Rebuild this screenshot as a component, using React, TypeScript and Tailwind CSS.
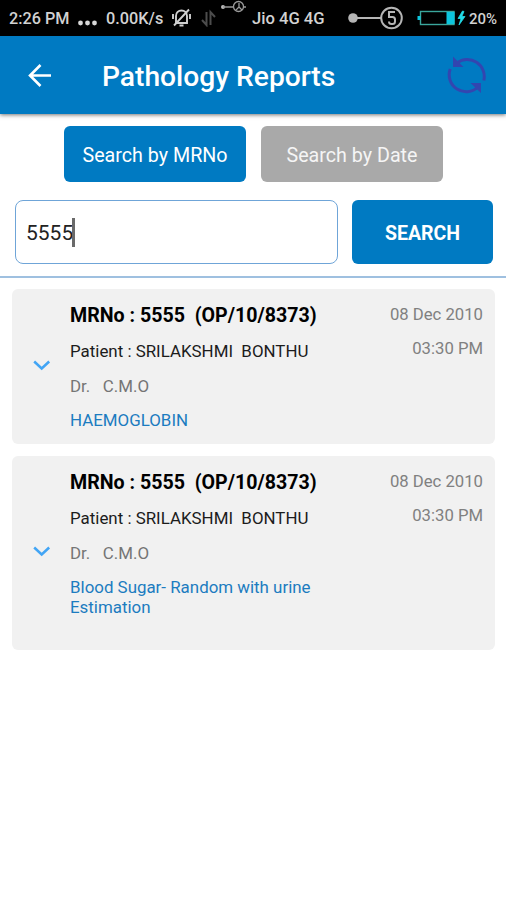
import { useState } from "react";

interface Report {
  id: number;
  mrNo: string;
  visit: string;
  patient: string;
  doctor: string;
  test: string;
  date: string;
  time: string;
}

const reports: Report[] = [
  {
    id: 1,
    mrNo: "5555",
    visit: "(OP/10/8373)",
    patient: "SRILAKSHMI  BONTHU",
    doctor: "C.M.O",
    test: "HAEMOGLOBIN",
    date: "08 Dec 2010",
    time: "03:30 PM",
  },
  {
    id: 2,
    mrNo: "5555",
    visit: "(OP/10/8373)",
    patient: "SRILAKSHMI  BONTHU",
    doctor: "C.M.O",
    test: "Blood Sugar- Random with urine Estimation",
    date: "08 Dec 2010",
    time: "03:30 PM",
  },
];

const StatusBar = () => (
  <div className="flex h-9 items-center bg-black pl-[9px] text-[16px] leading-5 font-medium whitespace-nowrap text-[#d2d2d2]">
    <span className="w-[69px] pt-0.5 text-[16.200px]">2:26 PM</span>
    <svg className="mt-2.5 h-1.5 w-[28px]" viewBox="0 0 28 6" fill="#d8d8d8">
      <circle cx="2.500" cy="3" r="2.400" />
      <circle cx="9.500" cy="3" r="2.400" />
      <circle cx="16.500" cy="3" r="2.400" />
    </svg>
    <span className="w-[65px] pt-0.5 text-[16.300px]">0.00K/s</span>
    <svg className="h-[22px] w-[22px]" viewBox="0 0 22 22" fill="none" stroke="#cfcfcf" strokeWidth="1.9">
      <path d="M5 16V9C5 5.500 7.500 3.500 10.500 3.500S16 5.500 16 9v7zM8.500 18.500h4" />
      <path d="M2 7v5M19 7v5M3 18.500L18 2.500" />
    </svg>
    <svg className="ml-2 h-[18px] w-[16px]" viewBox="0 0 16 18" fill="none" stroke="#4c4c4c" strokeWidth="2">
      <path d="M5.500 3v13L1 11M9.500 16V3L14 8" />
    </svg>
    <svg className="ml-[3px] h-3.5 w-[27px] self-start" viewBox="0 0 27 14" fill="none" stroke="#999" strokeWidth="1.3">
      <circle cx="3" cy="7" r="2" fill="#bbb" stroke="none" />
      <path d="M3 7h10M19 3v4l-3 3M19 7l3 3M23 7h3" />
      <circle cx="18.500" cy="6.500" r="5" />
    </svg>
    <span className="ml-[5px] w-[96px] pt-0.5 text-[16.600px]">Jio 4G 4G</span>
    <svg className="h-[26px] w-[56px]" viewBox="0 0 56 26" fill="none" stroke="#b5b5b5" strokeWidth="2">
      <circle cx="5" cy="13" r="4.800" fill="#b5b5b5" stroke="none" />
      <path d="M5 13h28" />
      <circle cx="43.500" cy="13" r="10.300" />
      <path d="M47 7h-6v5h3.500c1.500 0 2.500 1 2.500 2.500v2c0 1.500-1 2.500-2.500 2.500h-1c-1.500 0-2.500-1-2.500-2.500" />
    </svg>
    <svg className="ml-[13px] h-[18px] w-[52px]" viewBox="0 0 52 18" fill="none">
      <rect x="3.500" y="2.500" width="33.500" height="13" stroke="#3aa69c" strokeWidth="1.4" />
      <path d="M0.500 7h3v4h-3zM29.500 3h8v12h-8z" fill="#0cc5dd" />
      <path d="M45.500 2L41 9.500h3L42 16l6-8.500h-3.200l2.200-5z" fill="#22dce8" stroke="#22dce8" strokeWidth="0.800" />
    </svg>
    <span className="pt-0.5 text-[15px]">20%</span>
  </div>
);

const Header = () => (
  <header className="relative flex h-[78px] items-center bg-[#007ac2] pl-[27px] shadow-[0_1px_4px_rgba(0,0,0,0.55)]">
    <svg className="h-6 w-6" viewBox="0 0 24 24" fill="none" stroke="#fff" strokeWidth="2.600">
      <path d="M24 12.500H3M13.500 2L3 12.500 13.500 23" />
    </svg>
    <h1 className="ml-[51px] w-[345px] pt-1 text-[28.200px] leading-8 font-medium whitespace-nowrap text-white">
      Pathology Reports
    </h1>
    <svg className="h-10 w-10" viewBox="0 0 40 40" fill="none" stroke="#3346b0" strokeWidth="3">
      <path d="M10 8A17 17 0 0 1 36.800 25.500M31 32A17 17 0 0 1 3.200 14" />
      <path d="M6 1.500v10.500h10.500zM34 38V28H23.500z" fill="#3346b0" stroke="none" />
    </svg>
  </header>
);

const ReportCard = ({ report }: { report: Report }) => (
  <li className={`flex items-center rounded-md bg-[#f1f1f1] pr-3 pl-[21px] ${report.id === 1 ? "h-[155px]" : "h-[194px]"}`}>
    <svg className="-mt-1 h-3 w-[18px]" viewBox="0 0 18 12" fill="none" stroke="#42a5f5" strokeWidth="2.500">
      <path d="M1.200 2.500l7.500 7 7.500-7" />
    </svg>
    <div className="ml-[19px] w-[265px] self-start pt-[17px] text-[16.900px] leading-5 whitespace-pre-wrap">
      <h2 className="text-[19.620px] leading-5 font-bold whitespace-pre text-black">
        {`MRNo : ${report.mrNo}  ${report.visit}`}
      </h2>
      <p className="mt-[15px] whitespace-pre text-[#1c1c1c]">{`Patient : ${report.patient}`}</p>
      <p className="mt-[15px] text-[#757575]">{`Dr.   ${report.doctor}`}</p>
      <p className="mt-3.5 text-[#1c7cc0]">{report.test}</p>
    </div>
    <div className="flex-1 self-start pt-4 text-right text-[16.700px] leading-5 whitespace-nowrap text-[#808080]">
      <p>{report.date}</p>
      <p className="mt-3.5">{report.time}</p>
    </div>
  </li>
);

export default function App() {
  const [mode, setMode] = useState("mrno");

  return (
    <div className="h-[900px] w-[506px] overflow-hidden bg-white font-['Roboto',sans-serif]">
      <StatusBar />
      <Header />
      <div className="flex justify-center gap-[15px] pt-3 text-[19.700px]">
        <button
          className={`h-14 w-[182px] rounded-md pt-[3px] pl-px text-white ${mode === "mrno" ? "bg-[#007ac2]" : "bg-[#a9a9a9]"}`}
          onClick={() => setMode("mrno")}
        >
          Search by MRNo
        </button>
        <button
          className={`h-14 w-[182px] rounded-md pt-[3px] pl-px text-[#f5f5f5] ${mode === "date" ? "bg-[#007ac2]" : "bg-[#a9a9a9]"}`}
          onClick={() => setMode("date")}
        >
          Search by Date
        </button>
      </div>
      <div className="flex gap-3.5 border-b-2 border-[#9fc0e0] pt-[18px] pr-[13px] pb-3 pl-[15px]">
        <div className="flex h-16 flex-1 items-center rounded-lg border-[1.500px] border-[#6fa5d8] pl-2.5 text-[21px] text-[#222]">
          <span className="pt-[3px]">5555</span>
          <span className="-ml-px h-[29px] w-[3px] bg-[#6a6a6a]" />
        </div>
        <button className="h-16 w-[141px] rounded-md bg-[#007ac2] pt-[3px] text-[19.500px] font-bold text-white">
          SEARCH
        </button>
      </div>
      <ul className="flex flex-col gap-3 pt-[11px] pr-[11px] pl-3">
        {reports.map((report) => (
          <ReportCard key={report.id} report={report} />
        ))}
      </ul>
    </div>
  );
}
